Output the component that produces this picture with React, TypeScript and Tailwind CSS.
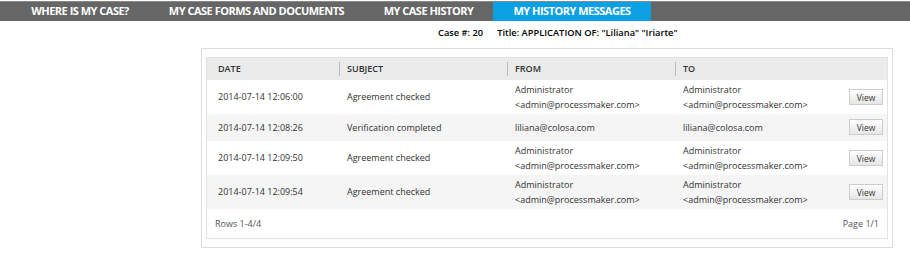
import React from 'react';

const TABS = [
  { label: 'WHERE IS MY CASE?', w: 'w-[138px]' },
  { label: 'MY CASE FORMS AND DOCUMENTS', w: 'w-[215px]' },
  { label: 'MY CASE HISTORY', w: 'w-[129px]' },
  { label: 'MY HISTORY MESSAGES', w: 'w-[158px]', active: true },
];

const ADMIN = ['Administrator', '<admin@processmaker.com>'];
const LILIANA = ['liliana@colosa.com'];

const ROWS = [
  { date: '2014-07-14 12:06:00', subject: 'Agreement checked', from: ADMIN, to: ADMIN },
  { date: '2014-07-14 12:08:26', subject: 'Verification completed', from: LILIANA, to: LILIANA },
  { date: '2014-07-14 12:09:50', subject: 'Agreement checked', from: ADMIN, to: ADMIN },
  { date: '2014-07-14 12:09:54', subject: 'Agreement checked', from: ADMIN, to: ADMIN },
];

export default function App() {
  return (
    <div className="w-[910px] h-[254px] bg-white font-['Open_Sans',sans-serif] text-[#333]">
      {/* Tabs */}
      <div className="mt-px flex h-5 pl-[11px] bg-[#666] border-t border-[#888]">
        {TABS.map((t) => (
          <div
            key={t.label}
            className={`${t.w} flex items-center justify-center text-[11px] font-bold tracking-[-0.5px] text-white ${
              t.active ? 'bg-[#0ba0e4]' : ''
            }`}
          >
            {t.label}
          </div>
        ))}
      </div>

      {/* Case info */}
      <div className="mt-[5px] flex pl-[438px] text-[9.3px] font-semibold text-black gap-[14px]">
        <span>Case #: 20</span>
        <span>Title: APPLICATION OF: "Liliana" "Iriarte"</span>
      </div>

      {/* Messages panel */}
      <div className="ml-[201px] mt-[8px] w-[692px] border border-[#ddd] px-[4px] pt-[8px] pb-[8px]">
        <div className="border border-[#e3e3e3] text-[9px]">
          <div className="grid grid-cols-[132px_168px_168px_1fr] h-[22px] bg-[#ebebeb] font-semibold text-[#333]">
            {['DATE', 'SUBJECT', 'FROM', 'TO'].map((h, i) => (
              <div key={h} className="flex items-center">
                {i > 0 && <span className="h-[14px] w-px bg-[#bbb] mr-[7px]" />}
                <span className={i === 0 ? 'pl-[11px]' : ''}>{h}</span>
              </div>
            ))}
          </div>
          {ROWS.map((r, i) => (
            <div
              key={i}
              className={`grid grid-cols-[132px_168px_168px_1fr] items-center ${
                r.from.length > 1 ? 'h-[34px]' : 'h-[27px]'
              } ${i % 2 === 1 ? 'bg-[#f5f5f5]' : 'bg-white'}`}
            >
              <div className="pl-[11px]">{r.date}</div>
              <div className="pl-[8px]">{r.subject}</div>
              <div className="pl-[8px] leading-[15px]">
                {r.from.map((l) => (
                  <div key={l}>{l}</div>
                ))}
              </div>
              <div className="flex items-center justify-between pl-[8px] pr-[4px] leading-[15px]">
                <div>
                  {r.to.map((l) => (
                    <div key={l}>{l}</div>
                  ))}
                </div>
                <button
                  type="button"
                  className="h-[16px] w-[34px] border border-[#ccc] bg-gradient-to-b from-white to-[#e6e6e6] text-[8.5px] text-[#333]"
                >
                  View
                </button>
              </div>
            </div>
          ))}
          <div className="flex h-[29px] items-center justify-between px-[8px] text-[#555]">
            <span>Rows 1-4/4</span>
            <span>Page 1/1</span>
          </div>
        </div>
      </div>
    </div>
  );
}
